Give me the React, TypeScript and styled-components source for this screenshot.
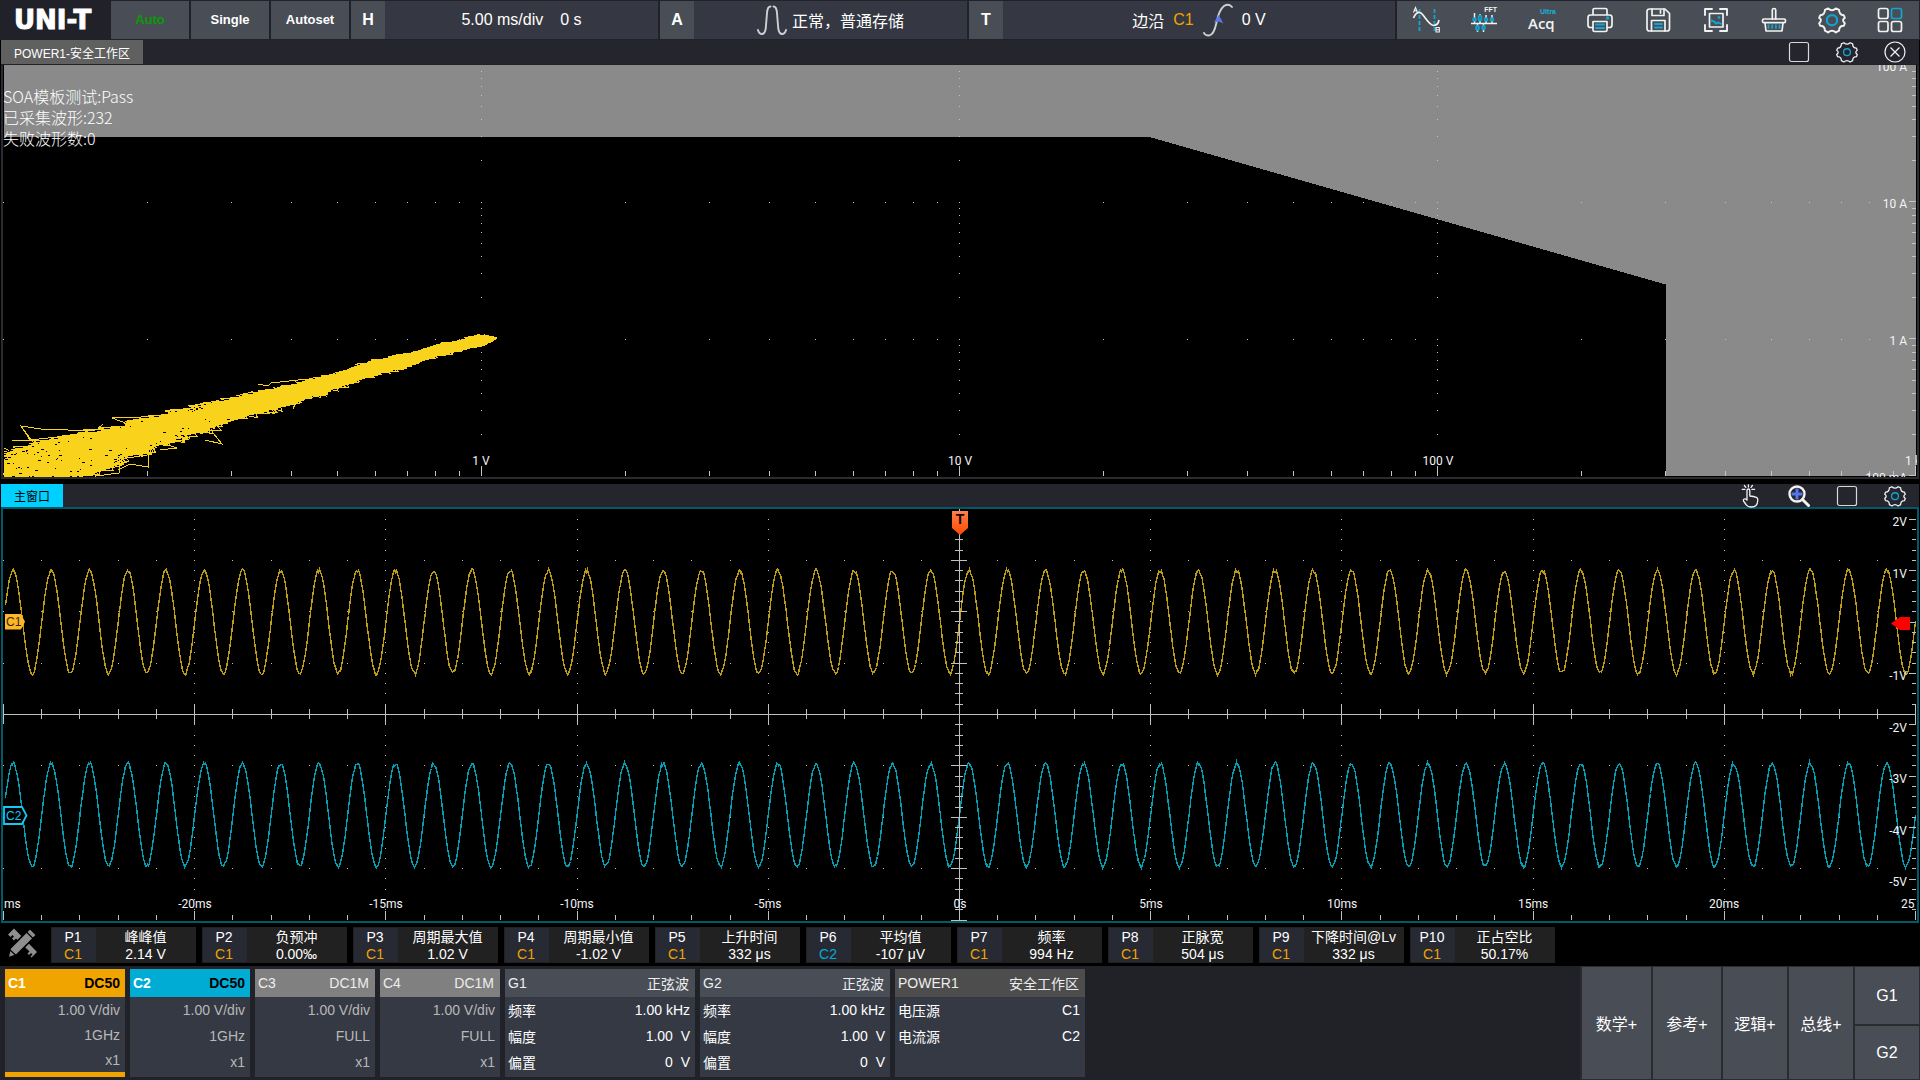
import React from "react";
import styled, { createGlobalStyle } from "styled-components";

const SANS = `"Liberation Sans", "Noto Sans CJK SC", sans-serif`;
const AXIS = `Roboto, "Noto Sans CJK SC", sans-serif`;
const C1 = "#f0a400";
const C2 = "#00acd4";

const GlobalStyle = createGlobalStyle`
  * { box-sizing: border-box; }
  body { margin: 0; background: #000; color: #fff; font-family: ${SANS}; }
  button { border: 0; margin: 0; padding: 0; background: none; color: inherit; font: inherit; cursor: pointer; }
`;

/* ---------- layout ---------- */

const Screen = styled.div`
  display: flex;
  flex-direction: column;
  min-height: 100vh;
  background: #000;
`;

const TopBar = styled.header`
  display: flex;
  gap: 2px;
  height: 40px;
  padding: 1px 1px 1px 0;
  background: #212229;
`;

const Logo = styled.div`
  display: flex;
  align-items: center;
  width: 109px;
  padding-left: 14px;
  font: 700 26px/38px "DejaVu Sans", sans-serif;
  -webkit-text-stroke: 1px #fff;
`;

const RunButton = styled.button<{ $color?: string }>`
  width: 78px;
  padding-bottom: 2px;
  background: #494d55;
  color: ${(p) => p.$color ?? "#fff"};
  font-weight: 700;
  font-size: 13px;
`;

const LetterButton = styled.button`
  width: 34px;
  background: #494d55;
  font-weight: 700;
  font-size: 16px;
`;

const Group = styled.div<{ $grow: number }>`
  display: flex;
  flex: ${(p) => p.$grow} 1 0;
`;

const Info = styled.div<{ $gap: number }>`
  display: flex;
  flex: 1;
  align-items: center;
  justify-content: center;
  gap: ${(p) => p.$gap}px;
  background: #353842;
  font-size: 16px;
  white-space: nowrap;
`;

const Source = styled.span<{ $color: string }>`
  color: ${(p) => p.$color};
`;

const Tools = styled.nav`
  display: flex;
  background: #494d55;
`;

const ToolButton = styled.button`
  display: flex;
  align-items: center;
  justify-content: center;
  width: 58px;
`;

const Panels = styled.main`
  display: flex;
  flex-direction: column;
  gap: 5px;
  padding: 0 1px;
`;

const Panel = styled.section<{ $frame: string }>`
  border: 2px solid ${(p) => p.$frame};
  border-top: 0;
`;

const TitleBar = styled.div<{ $line: string; $thick: number }>`
  display: flex;
  justify-content: space-between;
  height: 25px;
  margin: 0 -2px;
  border-bottom: ${(p) => p.$thick}px solid ${(p) => p.$line};
  background: #25252e;
`;

const Tab = styled.button<{ $bg: string; $fg: string }>`
  padding: 0 13px;
  background: ${(p) => p.$bg};
  color: ${(p) => p.$fg};
  font-size: 12px;
`;

const TitleTools = styled.div`
  display: flex;
`;

const TitleButton = styled.button`
  display: flex;
  align-items: center;
  justify-content: center;
  width: 48px;
`;

const PlotArea = styled.div`
  position: relative;
`;

const Plot = styled.svg`
  display: block;
  width: 100%;
  height: auto;
`;

const MaskReport = styled.div`
  position: absolute;
  top: 21px;
  left: 0;
  font: 300 16px/21px "Noto Sans CJK SC", sans-serif;
  color: #fff;
`;

const AxisText = styled.text`
  font-family: ${AXIS};
  font-size: 12px;
  fill: #f4f4f4;
`;

const MarkerText = styled.text<{ $size: number; $weight?: number }>`
  font-family: ${SANS};
  font-size: ${(p) => p.$size}px;
  font-weight: ${(p) => p.$weight ?? 400};
`;

const Measures = styled.div`
  display: flex;
  gap: 6px;
  height: 43px;
  padding: 4px 6px 3px;
`;

const MeasureTools = styled.button`
  width: 39px;
  height: 34px;
  text-align: left;
`;

const Measure = styled.button`
  display: flex;
  width: 145px;
  padding: 1px;
  background: #212121;
  font-size: 14px;
  line-height: 17px;
`;

const MeasureId = styled.span`
  display: grid;
  align-content: center;
  width: 44px;
  height: 34px;
  padding: 1px 2px 0 0;
  background: #272a33;
`;

const MeasureValue = styled.span`
  display: grid;
  flex: 1;
  align-content: center;
  height: 34px;
  padding-top: 1px;
  white-space: nowrap;
`;

const Footer = styled.footer`
  display: flex;
  flex: 1;
  justify-content: space-between;
  min-height: 114px;
  background: #212227;
`;

const Cards = styled.div`
  display: flex;
  gap: 5px;
  padding: 3px 5px;
`;

const Card = styled.button<{ $width: number; $accent?: string; $dim?: boolean }>`
  display: flex;
  flex-direction: column;
  width: ${(p) => p.$width}px;
  height: 108px;
  border-bottom: ${(p) => (p.$accent ? `5px solid ${p.$accent}` : "0")};
  background: #353944;
  color: ${(p) => (p.$dim ? "#b8b8b8" : "#fff")};
  font-size: 14px;
`;

const CardHead = styled.span<{ $bg: string; $bold?: boolean }>`
  display: flex;
  align-items: center;
  justify-content: space-between;
  width: 100%;
  height: 28px;
  padding: 0 ${(p) => (p.$bold ? 5 : 6)}px 0 3px;
  background: ${(p) => p.$bg};
  color: ${(p) => (p.$bold ? "#fff" : "#eee")};
  font-weight: ${(p) => (p.$bold ? 700 : 400)};
`;

const Coupling = styled.span<{ $dark?: boolean }>`
  color: ${(p) => (p.$dark ? "#000" : "inherit")};
`;

const CardRow = styled.span<{ $height: number }>`
  display: flex;
  align-items: center;
  justify-content: space-between;
  width: 100%;
  height: ${(p) => p.$height}px;
  padding: 0 5px 0 3px;
  white-space: pre;
`;

const Actions = styled.div`
  display: flex;
  gap: 2px;
  padding: 1px 1px 1px 2px;
  background: #2a2b2e;
`;

const ActionButton = styled.button<{ $width: number }>`
  width: ${(p) => p.$width}px;
  background: #494d55;
  font-size: 16px;
`;

const ActionStack = styled.div`
  display: grid;
  grid-template-rows: 58fr 53fr;
  gap: 2px;
`;

/* ---------- icons ---------- */

const W = "#f2f2f2";
const B = "#13a5cf";

const Icon = ({ size = 28, children }: { size?: number; children: React.ReactNode }) => (
  <svg width={size} height={size} viewBox="0 0 28 28" fill="none" stroke={W} strokeWidth="1.7" strokeLinecap="round" strokeLinejoin="round">
    {children}
  </svg>
);

const GEAR =
  "M10.4 3.2Q14 6.4 17.6 3.2L20.6 4.6Q20.6 9 25 9.6L26 12Q22.6 14 26 17L25 19.4Q20.6 19.4 20.6 24L17.6 25.6Q14 22.4 10.4 25.6L7.4 24Q7.4 19.4 3 19.4L2 17Q5.4 14 2 12L3 9.6Q7.4 9 7.4 4.6Z";

const GearIcon = ({ small }: { small?: boolean }) => (
  <Icon size={small ? 24 : 30}>
    <path d={GEAR} strokeWidth={small ? 1.5 : 1.8} />
    <circle cx="14" cy="14.2" r={small ? 4 : 4.8} stroke={B} strokeWidth={small ? 1.5 : 2} />
  </Icon>
);

const SquareIcon = () => (
  <svg width="22" height="22" viewBox="0 0 22 22" fill="none">
    <rect x="1.5" y="1.5" width="19" height="19" rx="2" stroke="#d8d8d8" strokeWidth="1.2" />
  </svg>
);

const CloseIcon = () => (
  <svg width="22" height="22" viewBox="0 0 22 22" fill="none" stroke={W} strokeWidth="1.2">
    <circle cx="11" cy="11" r="10" />
    <path d="M6.5 6.5l9 9m0-9l-9 9" />
  </svg>
);

const TouchIcon = () => (
  <svg width="24" height="24" viewBox="0 0 24 24" fill="none" stroke={W} strokeWidth="1.3" strokeLinecap="round" strokeLinejoin="round">
    <path d="M8 16V6.5q0-1.500 1.400-1.500t1.400 1.500V12q4 .2 6.600 1.300 1.600.8 1.400 2.700-.2 4-1.800 5.500-1.500 1.500-4.500 1.500-4 0-5.500-2.500L4.500 17q-.6-1.500.6-2Q6.500 14.600 8 16z" />
    <path d="M9.400 3V.8M6.800 3.400L5.400 1.500M12 3.400l1.400-1.900M6 5.300H3.200m9.600 0h2.800" />
  </svg>
);

const ZoomIcon = () => (
  <svg width="22" height="22" viewBox="0 0 22 22" fill="none">
    <path d="M9 3.500v11M3.500 9h11" stroke="#5573ea" strokeWidth="3" />
    <circle cx="9" cy="9" r="7.500" stroke={W} strokeWidth="2.400" />
    <path d="M14.500 14.500l6 6" stroke={W} strokeWidth="3" strokeLinecap="round" />
  </svg>
);

const CursorIcon = () => (
  <svg width="28" height="28" viewBox="0 0 28 28" fill="none">
    <path d="M7.500 3v22M22.500 3v22" stroke={B} strokeWidth="1.800" strokeDasharray="4 2" />
    <path d="M1.500 12C4 5.500 8 5 11 9c4 5 7 11 11 10.500 3.500-.4 4.500-2.500 5-5.500" stroke={W} strokeWidth="1.700" />
    <path d="M1.500 6.500l2-5 2 5M2.300 4.800h2.600M24 21.500h3.300v4.500H24zm0 2.200h3.300" stroke={W} strokeWidth="1.100" />
  </svg>
);

const FftIcon = () => (
  <svg width="28" height="28" viewBox="0 0 28 28" fill="none">
    <path d="M1 17.500h26M4.500 7v10M10 8v9M16 9v8M22 9v8M7.500 18v8M13.500 18v8" stroke={W} strokeWidth="1.500" />
    <g stroke={B} strokeWidth="1.900" fill="#494d55">
      <circle cx="4.500" cy="13.500" r="1.400" />
      <ellipse cx="10" cy="12" rx="1.400" ry="2.600" />
      <circle cx="16" cy="13.500" r="1.400" />
      <circle cx="22" cy="13.500" r="1.400" />
      <ellipse cx="7.500" cy="22" rx="1.300" ry="2.200" />
      <ellipse cx="13.500" cy="21.500" rx="1.300" ry="1.700" />
    </g>
    <text x="27" y="6" textAnchor="end" fontFamily="Liberation Sans, sans-serif" fontWeight="700" fontSize="7" fill={W}>FFT</text>
  </svg>
);

const AcqIcon = () => (
  <svg width="30" height="30" viewBox="0 0 30 30">
    <text x="29" y="9" textAnchor="end" fontFamily="Liberation Sans, sans-serif" fontWeight="700" fontSize="7" fill="#17b2de">Ultra</text>
    <text x="1" y="24" fontFamily="Open Sans, sans-serif" fontWeight="600" fontSize="15" fill={W}>Acq</text>
  </svg>
);

const PrintIcon = () => (
  <Icon>
    <path d="M7 9V4q0-1.500 1.500-1.500h11Q21 2.500 21 4v5M7 21.500H4.500Q2 21.500 2 19v-7.500Q2 9 4.500 9h19Q26 9 26 11.500V19q0 2.500-2.500 2.500H21" />
    <path d="M7 15.500h14V24q0 1.500-1.500 1.500h-11Q7 25.500 7 24z" />
    <path d="M10 18.500h8M10 22h8" stroke={B} strokeWidth="2" />
    <circle cx="21.500" cy="12" r=".9" stroke={B} />
  </Icon>
);

const SaveIcon = () => (
  <Icon>
    <path d="M3 5.500Q3 3 5.500 3H21l4.500 4.500v15q0 2.500-2.500 2.500H5.500Q3 25 3 22.500z" />
    <path d="M8 3v6.500h12V3M16.500 4.500v2.500M7.500 25V14.500h13.500V25" />
    <path d="M11 18h7M11 21.500h7" stroke={B} strokeWidth="2" />
  </Icon>
);

const CaptureIcon = () => (
  <Icon>
    <path d="M3 9V3h7M18 3h7v6M25 19v6h-7M10 25H3v-6" strokeWidth="1.900" />
    <rect x="7.500" y="7.500" width="13.500" height="13.500" />
    <path d="M9 14.500l3 1 2 2 2.500-1 3 1.500" stroke={B} strokeWidth="1.900" />
    <circle cx="17" cy="11.500" r=".6" stroke={B} />
  </Icon>
);

const BrushIcon = () => (
  <Icon>
    <path d="M12.300 13V4q0-1.500 1.700-1.500T15.700 4v9" />
    <rect x="2.500" y="13" width="23" height="3.600" rx="1.400" />
    <path d="M5 17l1 8h16l1-8" />
    <path d="M8.500 19v3M12.200 19v3M15.900 19v3M19.500 19v3" stroke={B} />
  </Icon>
);

const GridIcon = () => (
  <Icon>
    <rect x="2.500" y="2.500" width="9.500" height="10" rx="2" />
    <rect x="15.500" y="2.500" width="10" height="10" rx="2" stroke={B} />
    <rect x="2.500" y="15.500" width="9.500" height="10" rx="2" />
    <rect x="15.500" y="15.500" width="10" height="10" rx="2" />
  </Icon>
);

const PulseIcon = () => (
  <svg width="30" height="32" viewBox="0 0 30 32" fill="none" stroke="#cfd0d2" strokeWidth="1.900" strokeLinecap="round">
    <path d="M1 26q1 4 4 4t3.800-6L10 9q.5-6.500 3.500-6.500M29 26q-1 4-4 4t-3.800-6L20 9q-.5-6.500-3.500-6.500" />
  </svg>
);

const EdgeIcon = () => (
  <svg width="30" height="34" viewBox="0 0 30 34" fill="none">
    <path d="M1 30q1 2.500 5 2.500 5-.5 7.500-13T21 3q5-3 8 1" stroke="#cfd0d2" strokeWidth="1.900" strokeLinecap="round" />
    <path d="M15.800 12l4.600 8.500-4.600-2-5 1z" fill="#5a78e6" />
  </svg>
);

const PencilRulerIcon = () => (
  <svg width="32" height="32" viewBox="0 0 32 32">
    <path d="M8 1.500L2 7.500l2.500 2.500 2-2 1.500 1.500-2 2L8 13.500l2-2 13.500 13-2 2 1.500 1.500 2-2 1.500 1.500-2 2 1 1L31 25z" fill="#8f8f8f" />
    <path d="M24 1.500l6.500 6.500-20 20L2 31l2-9.500z" fill="#8f8f8f" stroke="#000" strokeWidth="1.600" />
    <path d="M20 4.500l7.500 7.500M3.500 22.500l6.500 6" stroke="#000" strokeWidth="1.200" />
  </svg>
);

/* ---------- plots ---------- */

const rng = (seed: number) => () => {
  seed = (seed * 1664525 + 1013904223) % 4294967296;
  return seed / 4294967296;
};

const L = 4;
const R = 1916;
const logX = (v: number) => 3.5 + 478 * Math.log10(v / 0.1);
const logY = (a: number) => 65 + 137 * Math.log10(100 / a);
const DECADES = [2, 3, 4, 5, 6, 7, 8, 9];

const Dot = ({ x, y }: { x: number; y: number }) => (
  <rect x={Math.round(x - 0.5)} y={Math.round(y - 0.5)} width="1" height="1" />
);

const UPPER: [number, number][] = [[4, 455], [30, 449], [75, 437], [103, 430], [147, 421], [165, 414], [190, 409], [222, 401], [258, 393], [290, 386], [310, 380], [338, 374], [352, 367], [375, 360], [407, 354], [435, 345], [455, 341], [478, 335], [490, 336], [497, 337]];
const LOWER: [number, number][] = [[497, 339], [490, 343], [465, 350], [435, 357], [407, 367], [375, 375], [338, 388], [307, 398], [280, 408], [250, 415], [215, 427], [180, 437], [150, 448], [120, 459], [100, 470], [92, 476]];

const edge = (pts: [number, number][], x: number) => {
  const s = [...pts].sort((a, b) => a[0] - b[0]);
  if (x <= s[0][0]) return s[0][1];
  for (let i = 1; i < s.length; i++) {
    if (x <= s[i][0]) {
      const t = (x - s[i - 1][0]) / (s[i][0] - s[i - 1][0] || 1);
      return s[i - 1][1] + t * (s[i][1] - s[i - 1][1]);
    }
  }
  return s[s.length - 1][1];
};

const cloud = (() => {
  const r = rng(17);
  const lines: string[] = [];
  for (let i = 0; i < 300; i++) {
    const x = 4 + Math.pow(r(), 1.4) * 485;
    const spread = 1 + 10 * Math.pow(1 - x / 500, 1.3);
    const top = edge(UPPER, x) - r() * spread * 0.6;
    const low = edge(LOWER, x) + r() * spread;
    const span = 8 + r() * 45 * (1 - x / 600);
    const ahead = Math.min(495, x + span);
    if (i % 2) lines.push(`M${ahead} ${edge(UPPER, ahead) + 2}L${x} ${top}L${x + (ahead - x) * 0.4} ${edge(UPPER, x + (ahead - x) * 0.4) + 3}`);
    else lines.push(`M${Math.max(4, x - span)} ${edge(LOWER, x - span) - 2}L${x} ${low}L${x - span * 0.2} ${edge(LOWER, x) - 3}`);
  }
  return lines.join("");
})();

const holes = (() => {
  const r = rng(5);
  const out: [number, number, number][] = [];
  for (let i = 0; i < 80; i++) {
    const x = 4 + Math.pow(r(), 1.6) * 230;
    const top = edge(UPPER, x);
    const low = x < 92 ? 475 : edge(LOWER, x);
    const k = r();
    out.push([x, i % 3 === 0 ? top + k * 5 : low - k * (x < 110 ? 26 : 12), 1 + Math.floor(r() * 3)]);
  }
  return out;
})();

const SoaPlot = () => (
  <Plot viewBox="3 65 1914 412" shapeRendering="crispEdges" role="img" aria-label="安全工作区">
    <rect x={L} y="65" width={R - L} height="411" fill="#8a8a8a" />
    <path d={`M4 137H${logX(25)}L${logX(300)} ${logY(2.5)}V476H4Z`} fill="#000" />
    <g fill="#c4c4c4">
      {[1, 10, 100].map((v) =>
        [100, 10, 1].map((a) => DECADES.map((m) => <Dot key={`${v}${a}${m}`} x={logX(v)} y={logY((a * m) / 10)} />))
      )}
      {[10, 1].map((a) =>
        [0.1, 1, 10, 100].map((v) => [1, ...DECADES].map((m) => <Dot key={`${a}${v}${m}`} x={logX(v * m)} y={logY(a)} />))
      )}
      {[0.1, 1, 10, 100].map((v) =>
        DECADES.map((m) => <rect key={`${v}${m}`} x={Math.round(logX(v * m) - 0.5)} y="471" width="1" height="5" />)
      )}
      {[1, 10, 100].map((v) => <rect key={v} x={Math.round(logX(v) - 0.5)} y="466" width="1" height="10" />)}
      {[100, 10, 1].map((a) =>
        DECADES.map((m) => <rect key={`${a}${m}`} x="1912" y={Math.round(logY((a * m) / 10) - 0.5)} width="4" height="1" />)
      )}
      {[10, 1, 0.1].map((a) => <rect key={a} x="1909" y={logY(a) - 1} width="7" height="1" />)}
      <rect x="1915" y="466" width="1" height="10" />
    </g>
    <path d={"M" + [...UPPER, ...LOWER].map((p) => p.join(" ")).join("L") + "L4 476Z"} fill="#f9d21c" />
    <path d={cloud} fill="none" stroke="#f9d21c" />
    <path
      d="M95 431L41 429L21 426L35 445M21 426L30 440L85 434M4 448L12 452M12 441L62 440L30 451M103 424L98 429M190 412L141 417L112 418L128 424M258 384L268 386L271 383L307 379M148 450L148 467L130 464L118 470M205 440L222 444L213 433M120 459L119 473L96 476M155 441L177 448L160 450M293 409L295 404L285 406M324 391L326 396L312 395"
      fill="none"
      stroke="#f9d21c"
    />
    <g fill="#000">
      {holes.map(([x, y, w], i) => <rect key={i} x={Math.round(x)} y={Math.round(y)} width={w} height="1" />)}
    </g>
    <AxisText x="481" y="465" textAnchor="middle">1 V</AxisText>
    <AxisText x="960" y="465" textAnchor="middle">10 V</AxisText>
    <AxisText x="1438" y="465" textAnchor="middle">100 V</AxisText>
    <AxisText x="1905" y="465">1 k</AxisText>
    <AxisText x="1907" y="71" textAnchor="end">100 A</AxisText>
    <AxisText x="1907" y="208" textAnchor="end">10 A</AxisText>
    <AxisText x="1907" y="345" textAnchor="end">1 A</AxisText>
    <AxisText x="1907" y="482" textAnchor="end">100 mA</AxisText>
  </Plot>
);

const DX = 191.2;
const DY = 51.4;
const CX = 959.5;
const CY = 714.5;
const range = (a: number, b: number) => Array.from({ length: b - a + 1 }, (_, i) => a + i);

const wave = (mid: number, amp: number, seed: number) => {
  const r = rng(seed);
  const pts: string[] = [];
  for (let x = 5; x < 1916; x++) {
    const s = Math.sin(((x + 0.5 - CX) / (DX / 5)) * 2 * Math.PI);
    const noise = (r() - 0.5) * (Math.abs(s) > 0.9 ? 4 : 2);
    pts.push(`${x + 0.5} ${(mid - amp * s + noise).toFixed(1)}`);
  }
  return pts.join(" ");
};

const WAVE1 = wave(622, 51.5, 3);
const WAVE2 = wave(815, 51.5, 9);

const TIMES: [number, string][] = [[-4, "-20ms"], [-3, "-15ms"], [-2, "-10ms"], [-1, "-5ms"], [0, "0s"], [1, "5ms"], [2, "10ms"], [3, "15ms"], [4, "20ms"]];
const VOLTS: [number, string][] = [[-2, "2V"], [-1, "1V"], [1, "-1V"], [2, "-2V"], [3, "-3V"], [4, "-4V"], [5, "-5V"]];

const MainPlot = () => (
  <Plot viewBox="3 509 1914 412" role="img" aria-label="主窗口">
    <defs>
      <linearGradient id="trigger" x1="0" y1="0" x2="0" y2="1">
        <stop offset="0" stopColor="#ff8048" />
        <stop offset="1" stopColor="#ff4800" />
      </linearGradient>
    </defs>
    <g shapeRendering="crispEdges">
      <g fill="#bcbcbc">
        {range(-4, 4).map((i) => range(-19, 19).map((j) => <Dot key={`v${i}${j}`} x={CX + i * DX} y={CY + (j * DY) / 5} />))}
        {[-3, -2, -1, 1, 2, 3].map((i) => range(-25, 24).map((j) => <Dot key={`h${i}${j}`} x={CX + (j * DX) / 5} y={CY + i * DY} />))}
      </g>
      <polyline points={WAVE1} fill="none" stroke="#bb9c12" strokeWidth="1.4" />
      <polyline points={WAVE2} fill="none" stroke="#00a0b4" strokeWidth="1.4" />
      <g fill="#c0c0c0">
        <rect x="3" y="714" width="1913" height="1" />
        <rect x="959" y="509" width="1" height="411" />
        {range(-25, 25).map((j) => {
          const half = j % 5 ? 5 : 10;
          const x = Math.min(1915, Math.max(3, Math.round(CX + (j * DX) / 5 - 0.5)));
          return (
            <React.Fragment key={j}>
              <rect x={x} y={714 - half} width="1" height={half * 2} />
              <rect x={x} y={920 - (j % 5 ? 5 : 9)} width="1" height={j % 5 ? 5 : 9} />
            </React.Fragment>
          );
        })}
        {range(-19, 20).map((j) => {
          const half = j % 5 ? 4 : 8;
          return <rect key={j} x={959 - half} y={Math.round(CY + (j * DY) / 5 - 0.5)} width={half * 2} height="1" />;
        })}
        {range(-10, 28).map((j) => (
          <rect key={j} x={j % 5 ? 1912 : 1909} y={Math.round(622 + (j * DY) / 5 - 0.5)} width={j % 5 ? 4 : 7} height="1" />
        ))}
      </g>
    </g>
    <AxisText x="4" y="908">ms</AxisText>
    {TIMES.map(([i, t]) => <AxisText key={t} x={Math.round(CX + i * DX)} y="908" textAnchor="middle">{t}</AxisText>)}
    <AxisText x="1901" y="908">25</AxisText>
    {VOLTS.map(([i, t]) => <AxisText key={t} x="1907" y={Math.round(622 + i * DY) + 7} textAnchor="end">{t}</AxisText>)}
    <path d="M952 511h16v17l-8 7-8-7z" fill="url(#trigger)" />
    <MarkerText $size={14} $weight={700} x="960" y="524" textAnchor="middle" fill="#100500">T</MarkerText>
    <path d="M5 614h16l4 7.800-4 7.800H5z" fill="#fdb62a" />
    <MarkerText $size={12} x="6" y="626" fill="#3a2800">C1</MarkerText>
    <path d="M4 807h18l4.500 8.500-4.500 8.500H4z" fill="#000" stroke="#12c8f4" strokeWidth="1.800" />
    <MarkerText $size={12} x="6" y="820" fill="#12c8f4">C2</MarkerText>
    <path d="M1891 623.500l9-6.500h10v13h-10z" fill="#f00" />
  </Plot>
);

/* ---------- data ---------- */

const TOOLS: [string, React.ReactNode][] = [
  ["光标", <CursorIcon />], ["FFT", <FftIcon />], ["UltraAcq", <AcqIcon />], ["打印", <PrintIcon />], ["保存", <SaveIcon />],
  ["截图", <CaptureIcon />], ["清除", <BrushIcon />], ["设置", <GearIcon />], ["菜单", <GridIcon />],
];

const MEASURES = [
  ["P1", "C1", "峰峰值", "2.14 V"], ["P2", "C1", "负预冲", "0.00‰"], ["P3", "C1", "周期最大值", "1.02 V"], ["P4", "C1", "周期最小值", "-1.02 V"],
  ["P5", "C1", "上升时间", "332 μs"], ["P6", "C2", "平均值", "-107 μV"], ["P7", "C1", "频率", "994 Hz"], ["P8", "C1", "正脉宽", "504 μs"],
  ["P9", "C1", "下降时间@Lv", "332 μs"], ["P10", "C1", "正占空比", "50.17%"],
];

const CHANNELS = [
  { id: "C1", coupling: "DC50", bw: "1GHz", bg: C1, on: true, active: true },
  { id: "C2", coupling: "DC50", bw: "1GHz", bg: C2, on: true, active: false },
  { id: "C3", coupling: "DC1M", bw: "FULL", bg: "#808080", on: false, active: false },
  { id: "C4", coupling: "DC1M", bw: "FULL", bg: "#808080", on: false, active: false },
];

const BOXES = [
  { id: "G1", kind: "正弦波", bg: "#494d56", rows: [["频率", "1.00 kHz"], ["幅度", "1.00  V"], ["偏置", "0  V"]] },
  { id: "G2", kind: "正弦波", bg: "#494d56", rows: [["频率", "1.00 kHz"], ["幅度", "1.00  V"], ["偏置", "0  V"]] },
  { id: "POWER1", kind: "安全工作区", bg: "#4d4d4d", rows: [["电压源", "C1"], ["电流源", "C2"]] },
];

export default function App() {
  return (
    <Screen>
      <GlobalStyle />
      <TopBar>
        <Logo>UNI-T</Logo>
        <RunButton $color="#0a9a0a">Auto</RunButton>
        <RunButton>Single</RunButton>
        <RunButton>Autoset</RunButton>
        <Group $grow={307}>
          <LetterButton>H</LetterButton>
          <Info $gap={17}><span>5.00 ms/div</span><span>0 s</span></Info>
        </Group>
        <Group $grow={307}>
          <LetterButton>A</LetterButton>
          <Info $gap={5}><PulseIcon /><span>正常，普通存储</span></Info>
        </Group>
        <Group $grow={426}>
          <LetterButton>T</LetterButton>
          <Info $gap={9}><span>边沿</span><Source $color={C1}>C1</Source><EdgeIcon /><span>0 V</span></Info>
        </Group>
        <Tools>
          {TOOLS.map(([name, icon]) => <ToolButton key={name} aria-label={name}>{icon}</ToolButton>)}
        </Tools>
      </TopBar>

      <Panels>
        <Panel $frame="#2a2a30">
          <TitleBar $line="#212229" $thick={1}>
            <Tab $bg="#606060" $fg="#fff">POWER1-安全工作区</Tab>
            <TitleTools>
              <TitleButton aria-label="最大化"><SquareIcon /></TitleButton>
              <TitleButton aria-label="窗口设置"><GearIcon small /></TitleButton>
              <TitleButton aria-label="关闭"><CloseIcon /></TitleButton>
            </TitleTools>
          </TitleBar>
          <PlotArea>
            <SoaPlot />
            <MaskReport>
              <div>SOA模板测试:Pass</div>
              <div>已采集波形:232</div>
              <div>失败波形数:0</div>
            </MaskReport>
          </PlotArea>
        </Panel>

        <Panel $frame="#005a69">
          <TitleBar $line="#005a69" $thick={2}>
            <Tab $bg="#00d0ff" $fg="#000">主窗口</Tab>
            <TitleTools>
              <TitleButton aria-label="触控"><TouchIcon /></TitleButton>
              <TitleButton aria-label="缩放"><ZoomIcon /></TitleButton>
              <TitleButton aria-label="最大化"><SquareIcon /></TitleButton>
              <TitleButton aria-label="窗口设置"><GearIcon small /></TitleButton>
            </TitleTools>
          </TitleBar>
          <PlotArea><MainPlot /></PlotArea>
        </Panel>
      </Panels>

      <Measures>
        <MeasureTools aria-label="测量工具"><PencilRulerIcon /></MeasureTools>
        {MEASURES.map(([id, src, name, value]) => (
          <Measure key={id}>
            <MeasureId><span>{id}</span><Source $color={src === "C1" ? C1 : C2}>{src}</Source></MeasureId>
            <MeasureValue><span>{name}</span><span>{value}</span></MeasureValue>
          </Measure>
        ))}
      </Measures>

      <Footer>
        <Cards>
          {CHANNELS.map((c) => {
            const h = c.active ? 25 : 26;
            return (
              <Card key={c.id} $width={120} $accent={c.active ? c.bg : undefined} $dim>
                <CardHead $bg={c.bg} $bold={c.on}><span>{c.id}</span><Coupling $dark={c.on}>{c.coupling}</Coupling></CardHead>
                <CardRow $height={h}><span /><span>1.00 V/div</span></CardRow>
                <CardRow $height={h}><span /><span>{c.bw}</span></CardRow>
                <CardRow $height={h}><span /><span>x1</span></CardRow>
              </Card>
            );
          })}
          {BOXES.map((b) => (
            <Card key={b.id} $width={190}>
              <CardHead $bg={b.bg}><span>{b.id}</span><span>{b.kind}</span></CardHead>
              {b.rows.map(([k, v]) => <CardRow key={k} $height={26}><span>{k}</span><span>{v}</span></CardRow>)}
            </Card>
          ))}
        </Cards>
        <Actions>
          <ActionButton $width={69}>数学+</ActionButton>
          <ActionButton $width={68}>参考+</ActionButton>
          <ActionButton $width={64}>逻辑+</ActionButton>
          <ActionButton $width={64}>总线+</ActionButton>
          <ActionStack>
            <ActionButton $width={64}>G1</ActionButton>
            <ActionButton $width={64}>G2</ActionButton>
          </ActionStack>
        </Actions>
      </Footer>
    </Screen>
  );
}
